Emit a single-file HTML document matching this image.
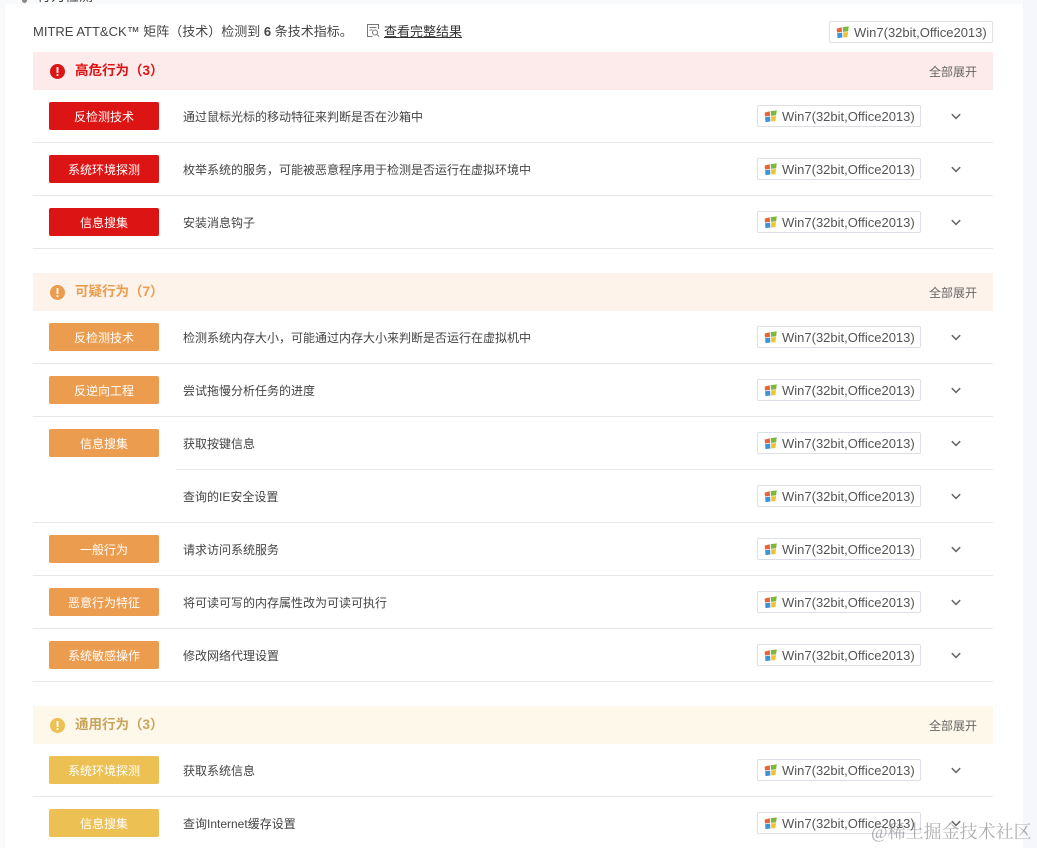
<!DOCTYPE html>
<html lang="zh">
<head>
<meta charset="utf-8">
<style>
html,body{margin:0;padding:0;width:1037px;height:848px;overflow:hidden;background:#f5f7fc}
body{position:relative;font-family:"Liberation Sans","Noto Sans CJK SC",sans-serif;color:#333}
.abs,.panel,.hdr,.tag,.txt,.ln,.os,.chev,.exp,.ttl,.ico{position:absolute}
.panel{left:5px;top:4px;width:1018px;height:844px;background:#fff}
.hdr{left:33px;width:960px;height:38px}
.ttl{left:75px;font-size:13.5px;font-weight:bold;line-height:38px;height:38px;white-space:nowrap}
.ico{left:50px;width:15px;height:15px}
.exp{left:929px;font-size:12px;color:#666;line-height:40px;height:38px;white-space:nowrap}
.tag{left:49px;width:110px;height:28px;border-radius:2px;color:#fff;font-size:12px;line-height:30px;text-align:center}
.txt{left:183px;font-size:12px;line-height:20px;color:#444;white-space:nowrap;padding-top:1px}
.ln{height:1px;background:#e8e8e8;right:44px}
.os{left:757px;width:162px;height:20px;border:1px solid #dcdfe6;border-radius:2px;background:#fff;font-size:13px;line-height:22px;color:#555;white-space:nowrap}
.os svg{position:absolute;left:6px;top:4px}
.os span{position:absolute;left:24px;top:0}
.chev{left:951px;width:10px;height:7px}
.r{background:#dd1414}.o{background:#ec9c4e}.y{background:#ecc052}
</style>
</head>
<body>
<svg width="0" height="0" style="position:absolute"><defs>
<symbol id="w" viewBox="0 0 12 12"><path d="M.6 2.4L5.3 1.2 5.6 5.4 1 6Z" fill="#e8633a"/><path d="M6.2 1 11.8 .4 11.2 5 6.5 5.4Z" fill="#7cb83c"/><path d="M1 6.7L5.6 6.1 5.9 10.6 1.4 11.2Z" fill="#3c93d8"/><path d="M6.5 6 11.1 5.7 10.5 10.3 6.8 10.6Z" fill="#f4c02f"/></symbol>
<symbol id="c" viewBox="0 0 10 7"><path d="M.8 1.2L5 5.4 9.2 1.2" fill="none" stroke="#666" stroke-width="1.5"/></symbol>
<symbol id="a" viewBox="0 0 16 16"><circle cx="8" cy="8" r="8" fill="currentColor"/><rect x="7" y="3.2" width="2" height="6.4" rx=".6" fill="#fff"/><rect x="7" y="10.8" width="2" height="2" rx=".6" fill="#fff"/></symbol>
</defs></svg>

<div class="panel"></div>
<div class="abs" style="left:0;top:0;width:1023px;height:4px;background:#f9fafc"></div>
<div class="abs" style="left:0;top:0;width:5px;height:848px;background:#f9fafc"></div>
<div class="abs" style="left:22px;top:0;width:5px;height:3px;background:#888;border-radius:0 0 3px 3px"></div>
<div class="abs" style="left:37px;top:-12px;font-size:14px;line-height:16px;color:#444;white-space:nowrap">行为检测</div>

<div class="abs" style="left:33px;top:22px;font-size:13px;line-height:20px;color:#444;white-space:nowrap">MITRE ATT&amp;CK™ 矩阵（技术）检测到 <b>6</b> 条技术指标。</div>
<svg class="abs" style="left:367px;top:24px" width="13" height="14" viewBox="0 0 13 14" fill="none" stroke="#777"><path d="M11.5 5V.5H.5v12h5"/><path d="M2.5 3.5h7M2.5 6h3"/><circle cx="8" cy="8.5" r="2.5"/><path d="M10 10.5l2 2"/></svg>
<div class="abs" style="left:384px;top:22px;font-size:13px;line-height:20px;color:#333;text-decoration:underline;white-space:nowrap">查看完整结果</div>
<div class="os" style="left:829px;top:21px"><svg width="13" height="13"><use href="#w"/></svg><span>Win7(32bit,Office2013)</span></div>

<!-- high -->
<div class="hdr" style="top:52px;background:#fdeaea"></div>
<svg class="ico" style="top:64px;color:#dd1414"><use href="#a"/></svg>
<div class="ttl" style="top:52px;color:#dd1414">高危行为（3）</div>
<div class="exp" style="top:52px">全部展开</div>

<div class="tag r" style="top:102px">反检测技术</div>
<div class="txt" style="top:106px">通过鼠标光标的移动特征来判断是否在沙箱中</div>
<div class="os" style="top:105px"><svg width="13" height="13"><use href="#w"/></svg><span>Win7(32bit,Office2013)</span></div>
<svg class="chev" style="top:113px"><use href="#c"/></svg>
<div class="ln" style="left:33px;top:142px"></div>

<div class="tag r" style="top:155px">系统环境探测</div>
<div class="txt" style="top:159px">枚举系统的服务，可能被恶意程序用于检测是否运行在虚拟环境中</div>
<div class="os" style="top:158px"><svg width="13" height="13"><use href="#w"/></svg><span>Win7(32bit,Office2013)</span></div>
<svg class="chev" style="top:166px"><use href="#c"/></svg>
<div class="ln" style="left:33px;top:195px"></div>

<div class="tag r" style="top:208px">信息搜集</div>
<div class="txt" style="top:212px">安装消息钩子</div>
<div class="os" style="top:211px"><svg width="13" height="13"><use href="#w"/></svg><span>Win7(32bit,Office2013)</span></div>
<svg class="chev" style="top:219px"><use href="#c"/></svg>
<div class="ln" style="left:33px;top:248px"></div>

<!-- medium -->
<div class="hdr" style="top:273px;background:#fdf3ea"></div>
<svg class="ico" style="top:285px;color:#ec9c4e"><use href="#a"/></svg>
<div class="ttl" style="top:273px;color:#ec9c4e">可疑行为（7）</div>
<div class="exp" style="top:273px">全部展开</div>

<div class="tag o" style="top:323px">反检测技术</div>
<div class="txt" style="top:327px">检测系统内存大小，可能通过内存大小来判断是否运行在虚拟机中</div>
<div class="os" style="top:326px"><svg width="13" height="13"><use href="#w"/></svg><span>Win7(32bit,Office2013)</span></div>
<svg class="chev" style="top:334px"><use href="#c"/></svg>
<div class="ln" style="left:33px;top:363px"></div>

<div class="tag o" style="top:376px">反逆向工程</div>
<div class="txt" style="top:380px">尝试拖慢分析任务的进度</div>
<div class="os" style="top:379px"><svg width="13" height="13"><use href="#w"/></svg><span>Win7(32bit,Office2013)</span></div>
<svg class="chev" style="top:387px"><use href="#c"/></svg>
<div class="ln" style="left:33px;top:416px"></div>

<div class="tag o" style="top:429px">信息搜集</div>
<div class="txt" style="top:433px">获取按键信息</div>
<div class="os" style="top:432px"><svg width="13" height="13"><use href="#w"/></svg><span>Win7(32bit,Office2013)</span></div>
<svg class="chev" style="top:440px"><use href="#c"/></svg>
<div class="ln" style="left:176px;top:469px"></div>

<div class="txt" style="top:486px">查询的IE安全设置</div>
<div class="os" style="top:485px"><svg width="13" height="13"><use href="#w"/></svg><span>Win7(32bit,Office2013)</span></div>
<svg class="chev" style="top:493px"><use href="#c"/></svg>
<div class="ln" style="left:33px;top:522px"></div>

<div class="tag o" style="top:535px">一般行为</div>
<div class="txt" style="top:539px">请求访问系统服务</div>
<div class="os" style="top:538px"><svg width="13" height="13"><use href="#w"/></svg><span>Win7(32bit,Office2013)</span></div>
<svg class="chev" style="top:546px"><use href="#c"/></svg>
<div class="ln" style="left:33px;top:575px"></div>

<div class="tag o" style="top:588px">恶意行为特征</div>
<div class="txt" style="top:592px">将可读可写的内存属性改为可读可执行</div>
<div class="os" style="top:591px"><svg width="13" height="13"><use href="#w"/></svg><span>Win7(32bit,Office2013)</span></div>
<svg class="chev" style="top:599px"><use href="#c"/></svg>
<div class="ln" style="left:33px;top:628px"></div>

<div class="tag o" style="top:641px">系统敏感操作</div>
<div class="txt" style="top:645px">修改网络代理设置</div>
<div class="os" style="top:644px"><svg width="13" height="13"><use href="#w"/></svg><span>Win7(32bit,Office2013)</span></div>
<svg class="chev" style="top:652px"><use href="#c"/></svg>
<div class="ln" style="left:33px;top:681px"></div>

<!-- low -->
<div class="hdr" style="top:706px;background:#fdf8ea"></div>
<svg class="ico" style="top:718px;color:#ecc052"><use href="#a"/></svg>
<div class="ttl" style="top:706px;color:#c9a35a">通用行为（3）</div>
<div class="exp" style="top:706px">全部展开</div>

<div class="tag y" style="top:756px">系统环境探测</div>
<div class="txt" style="top:760px">获取系统信息</div>
<div class="os" style="top:759px"><svg width="13" height="13"><use href="#w"/></svg><span>Win7(32bit,Office2013)</span></div>
<svg class="chev" style="top:767px"><use href="#c"/></svg>
<div class="ln" style="left:33px;top:796px"></div>

<div class="tag y" style="top:809px">信息搜集</div>
<div class="txt" style="top:813px">查询Internet缓存设置</div>
<div class="os" style="top:812px"><svg width="13" height="13"><use href="#w"/></svg><span>Win7(32bit,Office2013)</span></div>
<svg class="chev" style="top:820px"><use href="#c"/></svg>

<div class="abs" style="left:871px;top:820px;font-size:18px;line-height:24px;color:rgba(110,110,110,.55);white-space:nowrap;font-family:'Liberation Serif','Noto Serif CJK SC',serif">@稀土掘金技术社区</div>
</body>
</html>
